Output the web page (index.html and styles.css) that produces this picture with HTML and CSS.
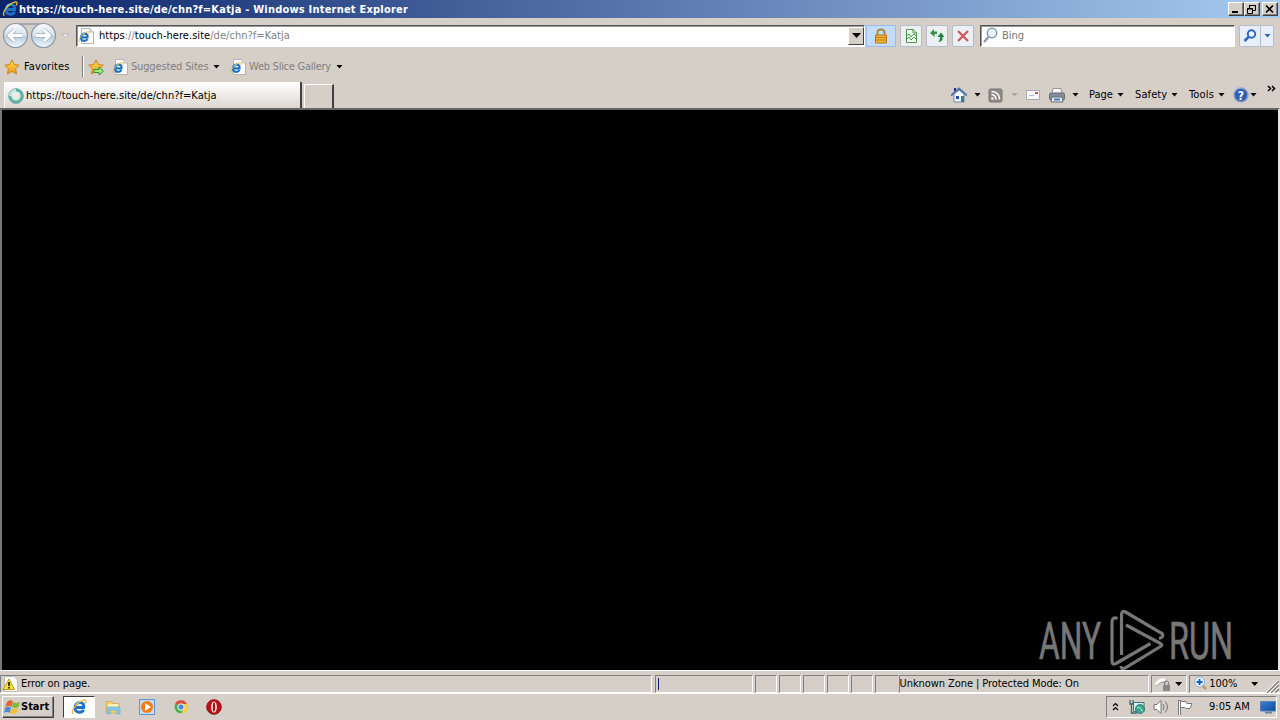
FILE: index.html
```html
<!DOCTYPE html>
<html lang="en">
<head>
    <meta charset="utf-8">
    <title>https://touch-here.site/de/chn?f=Katja - Windows Internet Explorer</title>
    <link rel="stylesheet" href="styles.css">
</head>
<body>
    <!-- shared icons -->
    <svg class="defs" width="0" height="0">
        <defs>
            <linearGradient id="gold" x2="0" y2="1"><stop offset="0" stop-color="#ffe45c"/><stop offset="1" stop-color="#ee9112"/></linearGradient>
            <linearGradient id="glass" x2="0" y2="1"><stop offset="0" stop-color="#fafcff"/><stop offset=".5" stop-color="#d5dfe9"/><stop offset=".52" stop-color="#b8cad9"/><stop offset="1" stop-color="#eefaff"/></linearGradient>
            <linearGradient id="screen" x2="1" y2="1"><stop offset="0" stop-color="#4380cf"/><stop offset=".5" stop-color="#2465ba"/><stop offset="1" stop-color="#0c479d"/></linearGradient>
            <symbol id="e" viewBox="0 0 16 16">
                <path d="M12.600 10.800C11.700 12.600 10 13.300 8.100 13.200C5 13 3.600 11 4 8.300C4.400 5.400 6.300 3.600 9 3.600C11.800 3.600 13.200 5.500 12.700 8.500H5.500" fill="none" stroke="#1c72c4" stroke-width="2.900"/>
                <path d="M4.400 6.300C5.300 4.200 6.800 3.300 9 3.100" fill="none" stroke="#6bc4f3" stroke-width="1.400"/>
                <path d="M2.300 14.800C-.2 12.800 3.200 7 8 3.400C11.600.8 15 .2 15 2.100C15 2.900 14.700 3.700 14.300 4.400" fill="none" stroke="#f0bd2d" stroke-width="1.300"/>
            </symbol>
            <symbol id="epage" viewBox="0 0 16 16">
                <path d="M3.500.5H12L15.500 4V15.500H3.500Z" fill="#fff" stroke="#b3b3b3"/>
                <path d="M12 .5V4H15.500" fill="#dedede" stroke="#bbb"/>
                <use href="#e" x="0" y="3" width="12" height="12"/>
            </symbol>
            <symbol id="star" viewBox="0 0 16 16">
                <path d="M8 .9L10.200 5.500L15.300 6.100L11.600 9.700L12.500 14.900L8 12.400L3.500 14.900L4.400 9.700L.7 6.100L5.800 5.500Z" fill="url(#gold)" stroke="#cc8520"/>
            </symbol>
        </defs>
    </svg>

    <div class="window">
        <div class="title-bar">
            <svg class="icon title-icon"><use href="#e"/></svg>
            <span class="title-text">https://touch-here.site/de/chn?f=Katja - Windows Internet Explorer</span>
            <div class="window-buttons">
                <button class="win-btn"><svg width="12" height="10"><path d="M3 8H9" stroke="#000" stroke-width="2"/></svg></button>
                <button class="win-btn"><svg width="12" height="10"><path d="M4.500 4V1.500H10.500V6.500H8M4 1.500H11M2.500 4.500H7.500V9.500H2.500ZM2 5H8" fill="none" stroke="#000"/></svg></button>
                <button class="win-btn close"><svg width="12" height="10"><path d="M3 1.500L10 8.500M10 1.500L3 8.500" stroke="#000" stroke-width="1.600"/></svg></button>
            </div>
        </div>

        <div class="nav-bar">
            <svg class="travel" width="72" height="28" viewBox="0 0 72 28">
                <path d="M14 2H43" stroke="#a7a5ad" stroke-width="2"/>
                <circle cx="15.500" cy="13.500" r="12" fill="url(#glass)" stroke="#8c97a5" stroke-width="1.200"/>
                <circle cx="43.500" cy="13.500" r="12" fill="url(#glass)" stroke="#8c97a5" stroke-width="1.200"/>
                <path d="M22 13.500H9M14.500 8L9 13.500L14.500 19M36 13.500H49M44 8L49.500 13.500L44 19" fill="none" stroke="#9fb0c0" stroke-width="4.400"/>
                <path d="M22 13.500H9M14.500 8L9 13.500L14.500 19M36 13.500H49M44 8L49.500 13.500L44 19" fill="none" stroke="#fff" stroke-width="3"/>
                <path d="M62 12H69L65.500 15.500Z" fill="#eee" stroke="#aaa" stroke-width=".7"/>
            </svg>
            <div class="address">
                <svg class="icon"><use href="#epage"/></svg>
                <span class="url"><b>https</b>://<b>touch-here.site</b>/de/chn?f=Katja</span>
                <button class="drop"><i class="caret big"></i></button>
            </div>
            <div class="lock">
                <svg width="16" height="16"><path d="M4.500 8V4.500Q4.500 1.500 8 1.500T11.500 4.500V8" fill="none" stroke="#a68a45" stroke-width="2"/><path d="M2.500 7H13.500V15H2.500Z" fill="#eeb331" stroke="#b87716"/><path d="M3 9.500H13M3 12H13" stroke="#c98115"/></svg>
            </div>
            <button class="tool-btn"><svg width="16" height="16"><path d="M3.500 1.500H10L13.500 5V14.500H3.500Z" fill="#f4fff1" stroke="#4a944b"/><path d="M10 1V5H14M3 8L6 6L8 9L11 6L13 8M3 12L6 9L8 12L11 9L13 11" fill="none" stroke="#4a944b"/></svg></button>
            <button class="tool-btn"><svg width="16" height="16"><path d="M1 5L5 1V3.500H8V6H5.500V9Z" fill="#369346"/><path d="M8.500 9L12 4.500L15.500 9H13.500V11Q13 13.500 9.500 14Q11 12.500 11 9Z" fill="#21853b"/></svg></button>
            <button class="tool-btn"><svg width="16" height="16"><path d="M3 3L13 13M13 3L3 13" stroke="#c85a5e" stroke-width="2.300"/></svg></button>
            <div class="search">
                <svg width="17" height="17"><circle cx="10" cy="6" r="4.700" fill="#e9f6ff" stroke="#8098b2" stroke-width="1.500"/><path d="M6.500 10L2 15" stroke="#8e97a6" stroke-width="2.300"/></svg>
                <span>Bing</span>
            </div>
            <div class="search-go">
                <button><svg width="16" height="16"><circle cx="9.500" cy="6" r="3.700" fill="#f3faff" stroke="#2d67bd" stroke-width="2"/><path d="M6.500 9L2.500 13" stroke="#2d67bd" stroke-width="2.500"/></svg></button>
                <button class="narrow"><i class="caret blue"></i></button>
            </div>
        </div>

        <div class="favorites-bar">
            <svg class="icon"><use href="#star"/></svg>
            <span class="w-favorites">Favorites</span>
            <i class="separator"></i>
            <svg class="icon add-star"><use href="#star"/><path d="M6 10.500H11V8L15.500 12L11 16V13.500H6Z" fill="#a0ed79" stroke="#289737"/></svg>
            <svg class="icon"><use href="#epage"/></svg>
            <span class="link w-suggested">Suggested Sites</span>
            <i class="caret"></i>
            <svg class="icon web-slice"><use href="#epage"/></svg>
            <span class="link w-slice">Web Slice Gallery</span>
            <i class="caret"></i>
        </div>

        <div class="tab-row">
            <div class="tab">
                <svg class="icon"><circle cx="8" cy="8" r="6" fill="none" stroke="#55b8a4" stroke-width="2.800"/><path d="M2 8A6 6 0 0 1 8 2" fill="none" stroke="#c7ece1" stroke-width="2.800"/><circle cx="8" cy="8" r="7.400" fill="none" stroke="#729a99" stroke-width=".7"/></svg>
                <span class="w-url">https://touch-here.site/de/chn?f=Katja</span>
            </div>
            <div class="new-tab"></div>
            <div class="command-bar">
                <svg class="icon"><path d="M3 1H5V4H3Z" fill="#252c81"/><path d="M3 7L8 3L13 7V15H3Z" fill="#f3f8ff" stroke="#7187a8"/><path d="M0 8.500L8 1.500L16 8.500" fill="none" stroke="#4f75ad" stroke-width="2"/><path d="M5 9H8V12H5Z" fill="#214d99"/><path d="M10 9H13V15H10Z" fill="#357e97"/></svg>
                <i class="caret c-home"></i>
                <svg class="icon feed"><rect x="1" y="2" width="13" height="13" rx="1.500" fill="#8d8985" stroke="#797570"/><circle cx="4.500" cy="11.500" r="1.300" fill="#fff"/><path d="M3.500 7.500Q8 8 8 12.500M3.500 4.500Q11.500 5 11.500 12.500" fill="none" stroke="#fff" stroke-width="1.500"/></svg>
                <i class="caret pale c-feed"></i>
                <svg class="icon mail"><path d="M1.500 3.500H14.500V12.500H1.500Z" fill="#f8f7fa" stroke="#aaa9b2"/><path d="M10 5H13V7H10Z" fill="#d2515a"/><path d="M4 8.500H9" stroke="#aebbd0"/></svg>
                <svg class="icon printer"><path d="M4 1.500H12L13 7H3Z" fill="#fafafa" stroke="#969696"/><rect x=".5" y="6" width="15" height="7" rx="1.500" fill="#868c95" stroke="#646b74"/><path d="M3 10H13L14 15H2Z" fill="#e6edf5" stroke="#696f77"/><path d="M5 12.500H11" stroke="#477aac" stroke-width="2"/></svg>
                <i class="caret c-print"></i>
                <span class="w-page">Page</span><i class="caret"></i>
                <span class="w-safety">Safety</span><i class="caret"></i>
                <span class="w-tools">Tools</span><i class="caret"></i>
                <svg class="icon help"><circle cx="8" cy="8" r="7" fill="#315db6" stroke="#91a7d0" stroke-width="1.500"/><text x="8" y="12.500" text-anchor="middle" class="question">?</text></svg>
                <i class="caret c-help"></i>
                <svg class="more" width="10" height="7"><path d="M1 1L3.500 3.500L1 6M5 1L7.500 3.500L5 6" fill="none" stroke="#000" stroke-width="1.500"/></svg>
            </div>
        </div>

        <div class="page">
            <svg class="watermark" width="200" height="64" viewBox="0 0 200 64">
                <g class="mark-text">
                    <text x="3" y="53" textLength="62" lengthAdjust="spacingAndGlyphs">ANY</text>
                    <text x="133" y="53" textLength="64" lengthAdjust="spacingAndGlyphs">RUN</text>
                </g>
                <path d="M81.500 12.500Q76 10.500 76 16V55Q76 59.500 80 57.500L114.500 37.500M85.500 49V9Q85.500 4 89.500 6L126 27.500Q128.500 31 123 32.500M90 19L124.500 37.500Q127 39 124.500 40.500L89 62Q85 64 85 60" fill="none" stroke="#777" stroke-width="3.200"/>
            </svg>
        </div>

        <div class="status-bar">
            <div class="cell s-message">
                <svg class="icon"><path d="M2.500.5H12L15.500 4V15.500H2.500Z" fill="#fff" stroke="#bbb"/><path d="M7 3L12.500 13.500H1Z" fill="#ffe22b" stroke="#b8a012"/><path d="M7 6V10M7 11V12.500" stroke="#000" stroke-width="1.500"/></svg>
                <span class="w-error">Error on page.</span>
            </div>
            <div class="cell s-progress"><i></i></div>
            <div class="cell small"></div>
            <div class="cell small"></div>
            <div class="cell small"></div>
            <div class="cell small"></div>
            <div class="cell small"></div>
            <div class="cell small last"></div>
            <div class="cell s-zone"><span class="w-zone">Unknown Zone | Protected Mode: On</span></div>
            <div class="cell s-privacy">
                <svg class="icon"><path d="M1 9Q5 3 10 4" fill="none" stroke="#fff" stroke-width="3"/><path d="M1 10Q6 5 10 6V11" fill="none" stroke="#9b9b9b"/><path d="M9.500 9V7Q9.500 5 11.500 5T13.500 7V9" fill="none" stroke="#858585" stroke-width="1.200"/><path d="M8 9H15V15H8Z" fill="#888"/></svg>
                <i class="caret"></i>
            </div>
            <div class="cell s-zoom">
                <svg class="icon"><path d="M9 9L13 13" stroke="#c19b63" stroke-width="2.500"/><circle cx="6.500" cy="6" r="5" fill="#edf8ff" stroke="#8bb4df"/><path d="M6.500 3V9M3.500 6H9.500" stroke="#1463ca" stroke-width="2"/></svg>
                <span class="w-zoom">100%</span>
                <i class="caret"></i>
                <svg class="grip" width="13" height="13"><path d="M1 13L13 1M5 13L13 5M9 13L13 9" stroke="#858179" stroke-width="1.400"/><path d="M0 12L12 0M4 12L13 3M8 12L13 7" stroke="#fff"/></svg>
            </div>
        </div>
    </div>

    <div class="taskbar">
        <button class="start">
            <svg width="17" height="16"><path d="M3 3Q6 0 9 2.500L7.500 8Q4 6 1 8.500Z" fill="#e86438"/><path d="M9.500 3Q13 5 16 2.500L14.500 8Q11 10 8 8Z" fill="#83b83c"/><path d="M1 9Q4 7 7 8.500L5.500 14Q3 12 0 14Z" fill="#498bd2"/><path d="M7.500 9Q11 11 14 9L12.500 14Q9 16 6 14Z" fill="#f4c22f"/></svg>
            <span>Start</span>
        </button>
        <button class="task-active"><svg class="icon"><use href="#e"/></svg></button>
        <svg class="icon folder"><path d="M1 2.500H7L8 4.500H14V14H1Z" fill="#f3cf68" stroke="#d2b260"/><path d="M3 5H13V9H3Z" fill="#fff4b4"/><path d="M2 15V9Q2 8 4 8H13Q15 8 15 10V15H12V11H5V15Z" fill="#8ac9e9" stroke="#65aed6" stroke-width=".7"/></svg>
        <svg class="icon player"><path d="M.5.5H15.500V15.500H.5Z" fill="#c1dcf4" stroke="#5c97cd"/><circle cx="8" cy="8" r="6" fill="#f17d16"/><path d="M6 4L12 8L6 12Z" fill="#fff"/></svg>
        <svg class="icon chrome"><circle cx="8" cy="8" r="6.500" fill="#4caf50"/><path d="M8 8L2.200 4.500A6.700 6.700 0 0 1 14 5H8Z" fill="#e34b3c"/><path d="M8 5H14.100A6.500 6.500 0 0 1 8 14.500L10.500 10Z" fill="#f8cf3b"/><circle cx="8" cy="8" r="3.200" fill="#4688dc" stroke="#fff"/></svg>
        <svg class="icon opera"><circle cx="8" cy="8" r="7.300" fill="#b9121b" stroke="#8c1115"/><ellipse cx="8" cy="8" rx="2.800" ry="5.500" fill="#fff"/><ellipse cx="8" cy="8" rx="1.300" ry="4.700" fill="#a7151a"/></svg>

        <div class="tray">
            <svg class="tray-more" width="7" height="10"><path d="M1 4L3.500 1.500L6 4M1 8L3.500 5.500L6 8" fill="none" stroke="#000" stroke-width="1.200"/></svg>
            <svg class="icon network"><path d="M4.500 3.500H15V12.500H4.500Z" fill="#d6edf0" stroke="#456f70"/><path d="M1 1V5H4V1M2.500 5V14H8" fill="none" stroke="#406766" stroke-width="1.300"/><circle cx="11" cy="10" r="4.500" fill="#3aa891" stroke="#337b80"/><path d="M8 9Q11 7 12 10T14 12" fill="none" stroke="#b7edcf"/></svg>
            <svg class="icon volume"><path d="M1 5.500H4L8 1.500V14.500L4 10.500H1Z" fill="#fff" stroke="#777"/><path d="M10 5Q12 8 10 11M12 2.500Q17 8 12 13.500" fill="none" stroke="#777"/></svg>
            <svg class="icon flag"><path d="M1.500 1V16M3.500 1V16M1 1.500H4" fill="none" stroke="#777"/><path d="M2.500 2V16" stroke="#fff"/><path d="M3.500 2.500H9L10 4.500H15L13 9.500H9L8 8.500H3.500Z" fill="#fff" stroke="#777"/></svg>
            <span class="w-time">9:05 AM</span>
            <svg class="icon desktop"><path d="M.5 2.500H15.500V12H.5Z" fill="url(#screen)" stroke="#5582b7"/><path d="M5 13.500H12" stroke="#6984a6" stroke-width="2"/></svg>
        </div>
    </div>
</body>
</html>
```
FILE: styles.css
```css
* {
    box-sizing: border-box;
}

body {
    margin: 0;
    width: 1280px;
    height: 720px;
    overflow: hidden;
    display: flex;
    flex-direction: column;
    background: #d5cfc8;
    color: #000;
    font-family: "DejaVu Sans Condensed", "DejaVu Sans", sans-serif;
    font-stretch: condensed;
    font-size: 11px;
    line-height: 14px;
}

svg, span, i, button {
    flex: none;
}

span {
    white-space: nowrap;
}

svg {
    display: block;
}

button {
    padding: 0;
    border: 0;
    font: inherit;
}

.defs {
    position: absolute;
}

.icon {
    width: 16px;
    height: 16px;
}

.window {
    height: 694px;
    display: flex;
    flex-direction: column;
}

/* small black dropdown arrow */
.caret {
    width: 7px;
    height: 4px;
    margin-right: -1px;
    background: #000;
    clip-path: polygon(0 0, 100% 0, 50% 100%);
}

.caret.big {
    width: 9px;
    height: 5px;
}

.caret.blue {
    background: #2a63b5;
}

.caret.pale {
    background: #aaa49c;
}

/* Title bar */
.title-bar {
    height: 18px;
    display: flex;
    align-items: center;
    padding: 0 2px;
    background: linear-gradient(to right, #0a246a, #a6caf0);
    color: #fff;
}

.title-text {
    margin: 1px 0 0 1px;
    font-weight: bold;
    letter-spacing: 0.21px;
}

.window-buttons {
    display: flex;
    margin-left: auto;
}

.win-btn {
    width: 16px;
    height: 14px;
    background: #d5cfc8;
    border: 1px solid;
    border-color: #fff #404040 #404040 #fff;
    box-shadow: inset -1px -1px #808080;
}

.win-btn.close {
    margin-left: 2px;
}

/* Address row */
.nav-bar {
    height: 35px;
    display: flex;
    align-items: center;
}

.address {
    width: 789px;
    height: 22px;
    margin-left: 4px;
    display: flex;
    align-items: center;
    padding-left: 1px;
    background: #fff;
    border: 1px solid;
    border-color: #555 #fff #fff #555;
    box-shadow: inset 1px 1px #999;
}

.url {
    margin-left: 5px;
    color: #808080;
    letter-spacing: 0.04px;
}

.url b {
    color: #000;
    font-weight: normal;
}

.drop {
    width: 16px;
    height: 18px;
    margin-left: auto;
    display: flex;
    align-items: center;
    justify-content: center;
    background: #d5cfc8;
    border: 1px solid;
    border-color: #fff #404040 #404040 #fff;
}

.lock {
    width: 30px;
    height: 22px;
    margin: 0 4px 0 1px;
    display: flex;
    align-items: center;
    justify-content: center;
    background: #c4dcff;
    border: 1px solid #9bbcf0;
}

.tool-btn {
    width: 22px;
    height: 22px;
    margin-right: 4px;
    display: flex;
    align-items: center;
    justify-content: center;
    background: #edf0f3;
    border: 1px solid #b4bdc9;
    border-radius: 2px;
}

.search {
    width: 255px;
    height: 22px;
    margin-left: 2px;
    display: flex;
    align-items: center;
    padding-left: 1px;
    background: #fff;
    border: 1px solid;
    border-color: #555 #fff #fff #555;
    box-shadow: inset 1px 1px #999;
    color: #777;
}

.search span {
    margin-left: 3px;
}

.search-go {
    margin-left: 4px;
    display: flex;
    border: 1px solid #b4bdc9;
    border-radius: 2px;
}

.search-go button {
    width: 20px;
    height: 20px;
    display: flex;
    align-items: center;
    justify-content: center;
    background: #e8eff8;
}

.search-go .narrow {
    width: 13px;
    border-left: 1px solid #b4bdc9;
}

/* Favorites bar */
.favorites-bar {
    height: 28px;
    display: flex;
    align-items: center;
    padding: 0 0 1px 4px;
}

.w-favorites {
    width: 58px;
    margin-left: 4px;
    letter-spacing: 0.1px;
}

.separator {
    width: 2px;
    height: 21px;
    border-left: 1px solid #808080;
    border-right: 1px solid #fff;
}

.add-star {
    margin: 0 8px 0 4px;
}

.link {
    color: #808080;
    margin: 1px 0 0 3px;
}

.w-suggested {
    width: 82px;
    letter-spacing: -0.16px;
}

.w-slice {
    width: 87px;
    letter-spacing: -0.26px;
}

.web-slice {
    margin-left: 11px;
}

/* Tabs and command bar */
.tab-row {
    height: 27px;
    display: flex;
    padding-left: 4px;
}

.tab {
    width: 298px;
    margin-top: 1px;
    display: flex;
    align-items: center;
    padding: 2px 0 0 3px;
    background: linear-gradient(to bottom, #fff, #eae8e5 60%, #dad5cf);
    border-left: 1px solid #fff;
    border-right: 2px solid #404040;
}

.w-url {
    margin-left: 2px;
    letter-spacing: 0.03px;
}

.new-tab {
    width: 30px;
    margin: 3px 1px 0 2px;
    border: 1px solid #fff;
    border-right: 2px solid #404040;
    border-bottom: 0;
}

.command-bar {
    display: flex;
    align-items: center;
    height: 27px;
    margin-left: 616px;
}

.c-home {
    margin: 0 7px 0 7px;
}

.c-feed {
    margin: 0 7px 0 7px;
}

.printer {
    margin-left: 8px;
}

.c-print {
    margin: 0 10px 0 7px;
}

.w-page {
    width: 28px;
}

.w-safety {
    width: 36px;
    margin-left: 12px;
    letter-spacing: 0.1px;
}

.w-tools {
    width: 29px;
    margin-left: 12px;
    letter-spacing: 0.15px;
}

.help {
    margin-left: 9px;
}

.c-help {
    margin-left: 1px;
}

.more {
    margin: -13px 0 0 11px;
}

.question {
    fill: #fff;
    font-size: 12px;
    font-weight: bold;
}

/* Browser page */
.page {
    height: 562px;
    display: flex;
    align-items: flex-end;
    justify-content: flex-end;
    padding-right: 42px;
    background: #000;
    border: solid;
    border-width: 2px 2px 0 2px;
    border-color: #666 #e8e5df #e8e5df #777;
}

.mark-text {
    fill: #777;
    stroke: #777;
    stroke-width: 0.7px;
    font-family: Roboto, sans-serif;
    font-size: 51px;
    font-stretch: normal;
}

/* Status bar */
.status-bar {
    height: 24px;
    display: flex;
    padding-top: 4px;
    border-top: 1px solid #fff;
    border-bottom: 1px solid #fff;
}

.cell {
    height: 18px;
    margin-right: 2px;
    display: flex;
    align-items: center;
    border: 1px solid;
    border-color: #808080 #fff #fff #808080;
}

.s-message {
    width: 653px;
    padding-left: 1px;
}

.s-message span {
    margin-left: 3px;
    letter-spacing: -0.1px;
}

.s-progress {
    width: 98px;
    margin-left: 1px;
    padding-left: 2px;
}

.s-progress i {
    width: 1px;
    height: 12px;
    background: #0a246a;
}

.small {
    width: 22px;
}

.last {
    width: 23px;
    margin-right: 1px;
    border-right: 0;
}

.s-zone {
    width: 251px;
    letter-spacing: -0.08px;
}

.s-privacy {
    width: 36px;
    padding-left: 3px;
}

.s-privacy .caret {
    margin-left: 4px;
}

.s-zoom {
    width: 91px;
    margin-right: 0;
    padding-left: 3px;
    border-right: 0;
}

.s-zoom .caret {
    margin-left: 10px;
}

.w-zoom {
    width: 32px;
}

.grip {
    margin: 4px 0 0 9px;
}

/* Taskbar */
.taskbar {
    height: 26px;
    display: flex;
    align-items: center;
    padding: 0 3px 0 2px;
}

.start {
    width: 52px;
    height: 22px;
    display: flex;
    align-items: center;
    padding-left: 1px;
    background: #d5cfc8;
    border: 1px solid;
    border-color: #fff #404040 #404040 #fff;
    box-shadow: inset -1px -1px #808080;
    font-weight: bold;
    color: #000;
}

.task-active {
    width: 32px;
    height: 22px;
    margin-left: 9px;
    display: flex;
    align-items: center;
    justify-content: center;
    background: #fff;
    border: 1px solid;
    border-color: #404040 #fff #fff #404040;
}

.folder {
    margin-left: 10px;
}

.player,
.chrome {
    margin-left: 18px;
}

.opera {
    margin-left: 17px;
}

.tray {
    width: 171px;
    height: 22px;
    margin-left: auto;
    display: flex;
    align-items: center;
    padding-left: 5px;
    border: 1px solid;
    border-color: #808080 #fff #fff #808080;
}

.network {
    margin-left: 10px;
}

.volume {
    margin-left: 8px;
}

.flag {
    margin-left: 8px;
}

.w-time {
    width: 42px;
    margin-left: 16px;
}

.desktop {
    margin-left: 9px;
}
```
